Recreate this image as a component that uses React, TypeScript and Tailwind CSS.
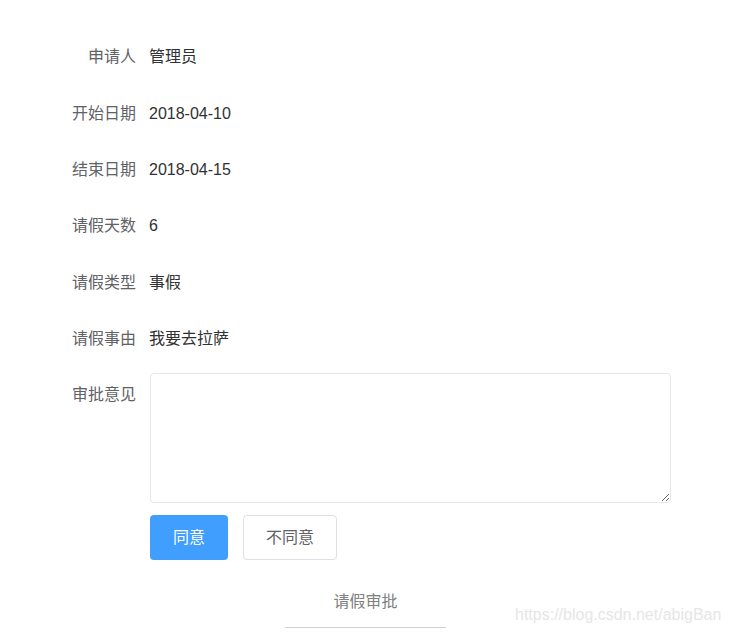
import React from "react";

const rows: [string, string][] = [
  ["申请人", "管理员"],
  ["开始日期", "2018-04-10"],
  ["结束日期", "2018-04-15"],
  ["请假天数", "6"],
  ["请假类型", "事假"],
  ["请假事由", "我要去拉萨"],
];

export default function App() {
  return (
    <div
      className="relative w-[729px] h-[634px] bg-white overflow-hidden text-[16px]"
      style={{ fontFamily: '"Liberation Sans", "Noto Sans CJK SC", sans-serif' }}
    >
      <div className="pt-[29px] flex flex-col">
        {rows.map(([l, v]) => (
          <div key={l} className="flex items-center h-[56.4px]">
            <div className="w-[136px] text-right text-[#606266]">{l}</div>
            <div className="ml-[13px] text-[#303133]">{v}</div>
          </div>
        ))}
        <div className="flex mt-[6px]">
          <div className="w-[136px] text-right text-[#606266] pt-[10px]">审批意见</div>
          <div className="ml-[14px] flex flex-col">
            <textarea className="w-[521px] h-[130px] border border-[#e4e7ed] rounded-[4px] bg-white outline-none resize-y" />
            <div className="flex gap-[15px] mt-[12px]">
              <button className="w-[78px] h-[45px] rounded-[4px] bg-[#409eff] text-white text-[16px]">同意</button>
              <button className="w-[94px] h-[45px] rounded-[4px] border border-[#dcdfe6] bg-white text-[#606266] text-[16px]">不同意</button>
            </div>
          </div>
        </div>
        <div className="flex flex-col items-center mt-[31px] ml-[2px]">
          <div className="text-[#808080] text-[16px] leading-[22px]">请假审批</div>
          <div className="w-[161px] h-[1px] bg-[#d0d0d0] mt-[14px]" />
        </div>
      </div>
      <div className="absolute left-[515px] top-[605px] text-[16px] text-[#e6e6e6] leading-[20px]">
        https://blog.csdn.net/abigBan
      </div>
    </div>
  );
}
